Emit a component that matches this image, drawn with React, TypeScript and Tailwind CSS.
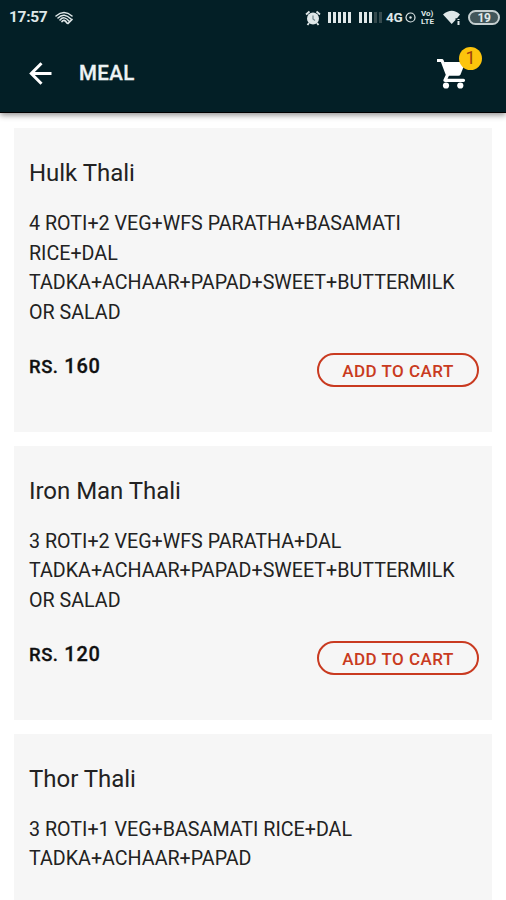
import React from "react";

type Meal = { name: string; lines: string[]; price?: string };

const meals: Meal[] = [
  {
    name: "Hulk Thali",
    lines: ["4 ROTI+2 VEG+WFS PARATHA+BASAMATI", "RICE+DAL", "TADKA+ACHAAR+PAPAD+SWEET+BUTTERMILK", "OR SALAD"],
    price: "160",
  },
  {
    name: "Iron Man Thali",
    lines: ["3 ROTI+2 VEG+WFS PARATHA+DAL", "TADKA+ACHAAR+PAPAD+SWEET+BUTTERMILK", "OR SALAD"],
    price: "120",
  },
  {
    name: "Thor Thali",
    lines: ["3 ROTI+1 VEG+BASAMATI RICE+DAL", "TADKA+ACHAAR+PAPAD"],
  },
];

function StatusBar() {
  return (
    <div className="flex h-[35px] items-center pl-[9px] pr-[6px] text-[#dfe7e8]">
      <span className="w-[46px] text-[15.5px] font-bold leading-none tracking-[-0.3px]">17:57</span>
      <svg className="h-[14px] w-[18px]" viewBox="0 0 18 14" fill="none" stroke="currentColor" strokeLinecap="round">
        <path d="M1 5Q9-2 17 5M3 7Q9 1 16 8M5 9Q9 4 14.500 10.500" strokeWidth="1.500" />
        <path d="M7 10.500Q9 7.500 12 12M13 12.500L17 8.500" strokeWidth="1.700" />
      </svg>
      <div className="ml-auto flex items-center">
        <svg className="mr-px h-4 w-4" viewBox="0 0 16 16" fill="none" stroke="currentColor">
          <circle cx="8" cy="8.500" r="6" fill="currentColor" stroke="none" />
          <path d="M1 4.500L4.500 1.500M15 4.500L11.500 1.500M4 13L2.500 15M12 13L13.500 15" strokeWidth="1.800" />
          <path d="M8 5.500V9L10 10.500" stroke="#70858a" strokeWidth="1.200" />
        </svg>
        <div className="ml-[6px] mr-px flex gap-[2px]">
          {[0, 1, 2, 3, 4].map((n) => (
            <i key={n} className="h-[11px] w-[3px] bg-[#dfe7e8]" />
          ))}
        </div>
        <div className="ml-[7px] flex gap-[2px]">
          {[0, 1, 2, 3, 4].map((n) => (
            <i key={n} className={n < 3 ? "h-[11px] w-[3px] bg-[#dfe7e8]" : "h-[11px] w-[3px] bg-[#35494d]"} />
          ))}
        </div>
        <span className="ml-[4px] w-[19px] text-[13.5px] font-bold leading-none tracking-[-0.3px]">4G</span>
        <svg className="h-[11px] w-[11px]" viewBox="0 0 11 11" fill="none" stroke="currentColor">
          <circle cx="5.500" cy="5.500" r="4.500" strokeWidth="1.200" />
          <circle cx="5.500" cy="5.500" r="1.200" fill="currentColor" stroke="none" />
        </svg>
        <span className="ml-[5px] flex w-[17px] flex-col text-[8px] font-bold leading-[8px]">
          <span>Vo)</span>
          <span>LTE</span>
        </span>
        <svg className="ml-[5px] mr-px h-[15px] w-[19px]" viewBox="0 0 19 15" fill="currentColor">
          <path d="M0 4.500Q9-3 17 4.500L14 8.200H12.500V10L8.700 14Z" />
          <path d="M14.500 9h2v1h-2zM14.500 11h2v4h-2z" />
        </svg>
        <div className="ml-[5px] flex h-[15px] w-[32px] items-center justify-center rounded-full border-2 border-[#c5cfd0] bg-[#42565a] text-[12px] font-bold leading-none tracking-[-0.5px]">
          19
        </div>
      </div>
    </div>
  );
}

function Header() {
  return (
    <header className="relative h-[113px] border-b border-black bg-[#031f26] shadow-[0_2px_6px_rgba(0,0,0,0.45)]">
      <StatusBar />
      <div className="flex h-[77px] items-center">
        <svg className="ml-[29px] h-[23px] w-[23px]" viewBox="0 0 23 23" fill="none" stroke="#fff" strokeWidth="3">
          <path d="M22.500 11.500H2M12.500 1.300L2.300 11.500L12.500 21.700" />
        </svg>
        <h1 className="ml-[27px] text-[20.5px] font-medium leading-none tracking-[0.4px] text-[#edf3f4] [-webkit-text-stroke:0.3px_#edf3f4]">
          MEAL
        </h1>
        <div className="relative ml-auto mr-[36px] h-[34px] w-[33px]">
          <svg className="h-[34px] w-[33px]" viewBox="0 0 33 34" fill="#fff">
            <path d="M.5 3.500H5L10.500 18L8 23.300H26.500" fill="none" stroke="#fff" strokeWidth="3.200" strokeLinecap="round" strokeLinejoin="round" />
            <path d="M7 5H28.500L23.500 17.500Q22.800 18.800 21.300 18.800H10.500Z" />
            <circle cx="9" cy="28.500" r="3.100" />
            <circle cx="23.300" cy="28.500" r="3.100" />
          </svg>
          <span className="absolute left-[22px] top-[-10px] flex h-[23px] w-[23px] items-center justify-center rounded-full bg-[#fcc40c] text-[18px] leading-none text-[#9c3d0c]">
            1
          </span>
        </div>
      </div>
    </header>
  );
}

function MealCard({ meal }: { meal: Meal }) {
  return (
    <article className="shrink-0 bg-[#f6f6f6] pb-[44.5px] pl-[15px] pr-[13px] pt-[29px]">
      <h2 className="text-[24px] leading-[32px] tracking-[-0.03px] text-[#222]">{meal.name}</h2>
      <p className="mt-[20px] text-[19.680px] leading-[29.500px] text-[#222]">
        {meal.lines.map((line) => (
          <span key={line} className="block whitespace-nowrap">{line}</span>
        ))}
      </p>
      {meal.price ? (
        <div className="mt-[26px] flex h-[34px] items-center justify-between">
          <span className="mb-[7px] text-[20px] font-medium leading-none tracking-[0.8px] text-[#111] [-webkit-text-stroke:0.3px_#111]">
            <span className="text-[18.500px] tracking-[0.500px]">RS.</span> {meal.price}
          </span>
          <button className="flex h-[34px] w-[162px] items-center justify-center rounded-full border-[2.500px] border-[#c93a20] pt-[3px] text-[17px] font-medium leading-none tracking-[0.500px] text-[#c93a20]">
            ADD TO CART
          </button>
        </div>
      ) : (
        <div className="h-[60px]" />
      )}
    </article>
  );
}

export default function App() {
  return (
    <div className="flex h-[900px] w-[506px] flex-col overflow-hidden bg-white font-[Roboto,'Liberation_Sans',sans-serif]">
      <Header />
      <main className="flex min-h-0 flex-1 flex-col gap-[14px] overflow-hidden px-[14px] pt-[15px]">
        {meals.map((meal) => (
          <MealCard key={meal.name} meal={meal} />
        ))}
      </main>
    </div>
  );
}
